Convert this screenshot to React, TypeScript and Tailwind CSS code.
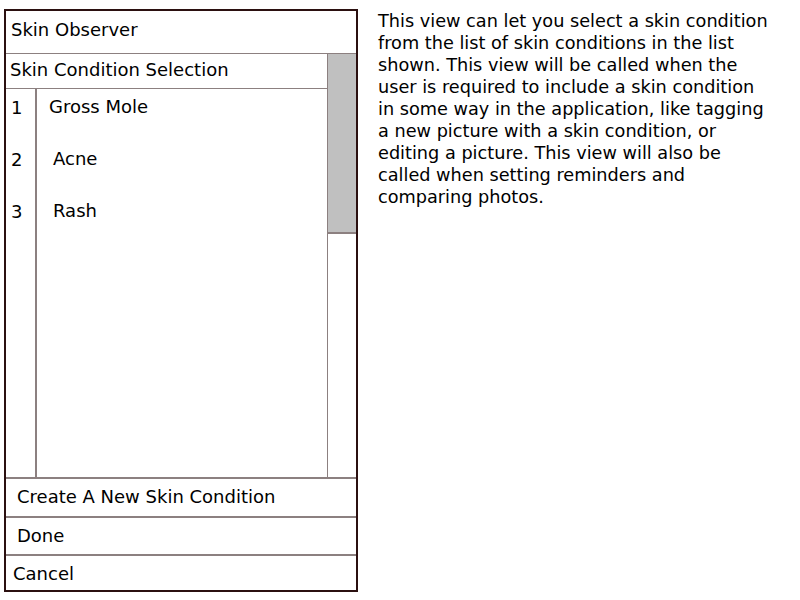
import React from "react";

export default function App() {
  const items = [
    { n: "1", label: "Gross Mole", pl: "pl-[12px]" },
    { n: "2", label: "Acne", pl: "pl-[16px]" },
    { n: "3", label: "Rash", pl: "pl-[16px]" },
  ];
  return (
    <div
      className="w-[800px] h-[600px] bg-white flex text-black"
      style={{ fontFamily: '"DejaVu Sans", Verdana, sans-serif' }}
    >
      <div className="ml-[4px] mt-[9px] w-[354px] h-[583px] border-2 border-[#2b1010] flex flex-col text-[18px]">
        <div className="h-[43px] border-b border-[#8c8080] flex items-center pl-[5px] pb-[6px] shrink-0">
          Skin Observer
        </div>
        <div className="flex flex-1 min-h-0">
          <div className="flex-1 flex flex-col border-r border-[#8c8080]">
            <div className="h-[35px] border-b border-[#8c8080] flex items-center pl-[4px] pb-[3px] shrink-0">
              Skin Condition Selection
            </div>
            <div className="flex flex-1">
              <div className="w-[31px] border-r-2 border-[#8c8080] flex flex-col">
                {items.map((it) => (
                  <div key={it.n} className="h-[52px] pl-[5px] pt-[9px] leading-[20px]">
                    {it.n}
                  </div>
                ))}
              </div>
              <div className="flex-1 flex flex-col">
                {items.map((it) => (
                  <div key={it.n} className={`h-[52px] pt-[8px] leading-[20px] ${it.pl}`}>
                    {it.label}
                  </div>
                ))}
              </div>
            </div>
          </div>
          <div className="w-[28px] flex flex-col">
            <div className="h-[180px] bg-[#c0c0c0] border-b-2 border-[#8c8080]" />
            <div className="flex-1" />
          </div>
        </div>
        <div className="border-t-2 border-[#8c8080] shrink-0">
          <div className="h-[39px] border-b-2 border-[#8c8080] flex items-center pl-[11px] pb-[2px]">
            Create A New Skin Condition
          </div>
          <div className="h-[38px] border-b-2 border-[#8c8080] flex items-center pl-[11px] pb-[2px]">
            Done
          </div>
          <div className="h-[34px] flex items-center pl-[7px]">Cancel</div>
        </div>
      </div>
      <div className="ml-[20px] mt-[10px] w-[392px] text-[17.7px] leading-[22px]">
        This view can let you select a skin condition from the list of skin
        conditions in the list shown. This view will be called when the user is
        required to include a skin condition in some way in the application,
        like tagging a new picture with a skin condition, or editing a picture.
        This view will also be called when setting reminders and comparing
        photos.
      </div>
    </div>
  );
}
